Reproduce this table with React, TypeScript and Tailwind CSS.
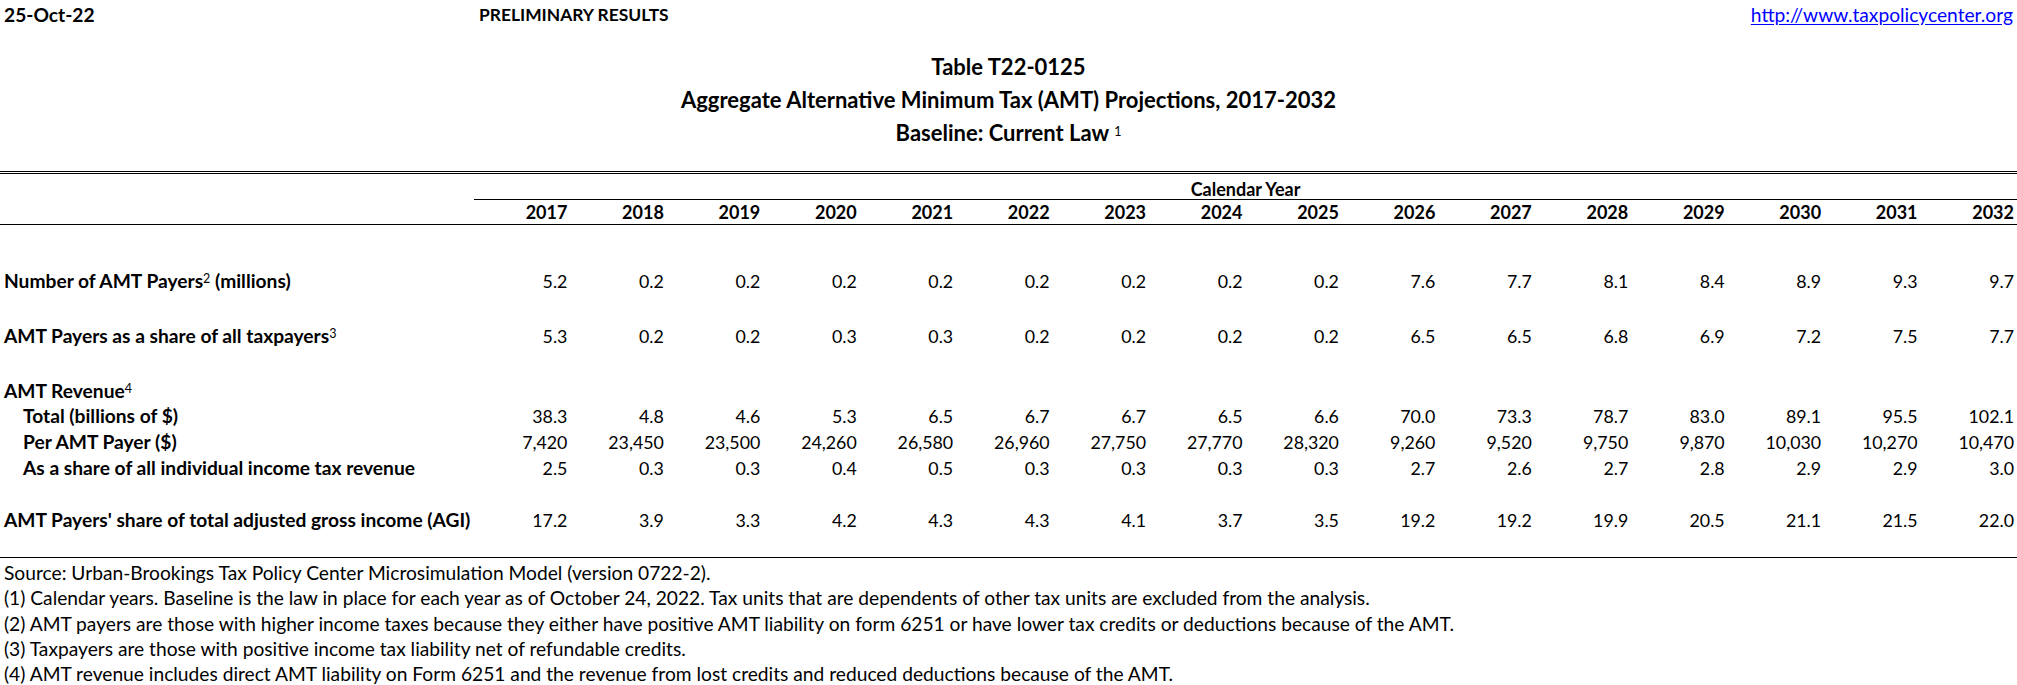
import React from "react";

const years = [
  2017, 2018, 2019, 2020, 2021, 2022, 2023, 2024, 2025, 2026, 2027, 2028, 2029, 2030, 2031, 2032,
];

const data = {
  payers: ["5.2", "0.2", "0.2", "0.2", "0.2", "0.2", "0.2", "0.2", "0.2", "7.6", "7.7", "8.1", "8.4", "8.9", "9.3", "9.7"],
  share: ["5.3", "0.2", "0.2", "0.3", "0.3", "0.2", "0.2", "0.2", "0.2", "6.5", "6.5", "6.8", "6.9", "7.2", "7.5", "7.7"],
  total: ["38.3", "4.8", "4.6", "5.3", "6.5", "6.7", "6.7", "6.5", "6.6", "70.0", "73.3", "78.7", "83.0", "89.1", "95.5", "102.1"],
  perPayer: ["7,420", "23,450", "23,500", "24,260", "26,580", "26,960", "27,750", "27,770", "28,320", "9,260", "9,520", "9,750", "9,870", "10,030", "10,270", "10,470"],
  revShare: ["2.5", "0.3", "0.3", "0.4", "0.5", "0.3", "0.3", "0.3", "0.3", "2.7", "2.6", "2.7", "2.8", "2.9", "2.9", "3.0"],
  agi: ["17.2", "3.9", "3.3", "4.2", "4.3", "4.3", "4.1", "3.7", "3.5", "19.2", "19.2", "19.9", "20.5", "21.1", "21.5", "22.0"],
};

const footnotes = [
  "Source: Urban-Brookings Tax Policy Center Microsimulation Model (version 0722-2).",
  "(1) Calendar years. Baseline is the law in place for each year as of October 24, 2022. Tax units that are dependents of other tax units are excluded from the analysis.",
  "(2) AMT payers are those with higher income taxes because they either have positive AMT liability on form 6251 or have lower tax credits or deductions because of the AMT.",
  "(3) Taxpayers are those with positive income tax liability net of refundable credits.",
  "(4) AMT revenue includes direct AMT liability on Form 6251 and the revenue from lost credits and reduced deductions because of the AMT.",
];

function Sup({ n }: { n: string }) {
  return <sup className="relative -top-[5px] text-[12.5px] font-normal">{n}</sup>;
}

function DataRow({
  label,
  values,
  indent = false,
  height = "h-[26px]",
}: {
  label: React.ReactNode;
  values?: string[];
  indent?: boolean;
  height?: string;
}) {
  return (
    <div className={`grid grid-cols-[474px_repeat(16,1fr)] items-center ${height}`}>
      <div className={`whitespace-nowrap text-[19.2px] font-bold ${indent ? "pl-[23px]" : "pl-[4px]"}`}>{label}</div>
      {values?.map((v, i) => (
        <div key={i} className="pr-[3px] text-right text-[17.8px]">
          {v}
        </div>
      ))}
    </div>
  );
}

export default function App() {
  return (
    <div className="w-[2017px] h-[685px] bg-white text-black font-['Lato','Carlito','Liberation_Sans',sans-serif] text-[19.2px] leading-[22px]">
      {/* top strip */}
      <div className="flex h-[30px] items-center font-bold">
        <div className="w-[474px] pl-[4px]">25-Oct-22</div>
        <div className="flex flex-1 items-center justify-between pl-[5px] pr-[4px]">
          <span className="text-[17.4px]">PRELIMINARY RESULTS</span>
          <a href="#" className="font-normal text-[#0000ff] underline underline-offset-2">
            http://www.taxpolicycenter.org
          </a>
        </div>
      </div>

      {/* title */}
      <div className="mt-[20px] flex flex-col items-center text-[22px] font-bold leading-[33px]">
        <div>Table T22-0125</div>
        <div>Aggregate Alternative Minimum Tax (AMT) Projections, 2017-2032</div>
        <div>
          Baseline: Current Law <Sup n="1" />
        </div>
      </div>

      {/* header */}
      <div className="mt-[21.5px] border-t-[3px] border-double border-black">
        <div className="grid h-[25px] grid-cols-[474px_1fr] pt-[5px]">
          <div />
          <div className="border-b border-black text-center text-[18px] font-bold leading-[20px]">Calendar Year</div>
        </div>
        <div className="grid h-[26px] grid-cols-[474px_repeat(16,1fr)] items-center border-b border-black pt-[1px] text-[18px] font-bold">
          <div />
          {years.map((y) => (
            <div key={y} className="pr-[3px] text-right">
              {y}
            </div>
          ))}
        </div>
      </div>

      {/* body */}
      <div className="pt-[43px]">
        <DataRow
          label={
            <>
              Number of AMT Payers<Sup n="2" /> (millions)
            </>
          }
          values={data.payers}
        />
        <div className="h-[29px]" />
        <DataRow
          label={
            <>
              AMT Payers as a share of all taxpayers<Sup n="3" />
            </>
          }
          values={data.share}
        />
        <div className="h-[29px]" />
        <DataRow
          label={
            <>
              AMT Revenue<Sup n="4" />
            </>
          }
        />
        <DataRow label="Total (billions of $)" values={data.total} indent height="h-[25px]" />
        <DataRow label="Per AMT Payer ($)" values={data.perPayer} indent />
        <DataRow label="As a share of all individual income tax revenue" values={data.revShare} indent />
        <div className="h-[26px]" />
        <DataRow label="AMT Payers' share of total adjusted gross income (AGI)" values={data.agi} />
      </div>

      {/* notes */}
      <div className="mt-[24px] border-t border-black pt-[3px]">
        {footnotes.map((f, i) => (
          <div key={i} className="flex h-[25.3px] items-center whitespace-nowrap pl-[4px]">
            {f}
          </div>
        ))}
      </div>
    </div>
  );
}
